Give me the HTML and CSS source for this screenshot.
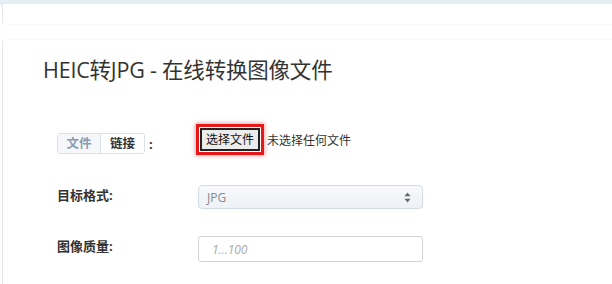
FILE: index.html
```html
<!DOCTYPE html>
<html lang="zh-CN">
<head>
<meta charset="utf-8">
<title>HEIC转JPG</title>
<link rel="stylesheet" href="styles.css">
</head>
<body>
<div class="topband"></div>
<div class="card card-top"></div>
<div class="card card-main">
  <h1 class="title">HEIC转JPG - 在线转换图像文件</h1>
  <div class="form">
    <div class="row row-file">
      <div class="label">
        <span class="tabs"><span class="tab tab-off">文件</span><span class="tab tab-on">链接</span></span><span class="colon">:</span>
      </div>
      <div class="control file-control">
        <span class="highlight"><span class="file-btn">选择文件</span></span><span class="file-none">未选择任何文件</span>
      </div>
    </div>
    <div class="row row-select">
      <div class="label label-text">目标格式:</div>
      <div class="control">
        <div class="select">
          <span class="select-value">JPG</span>
          <svg class="select-arrows" width="7" height="11" viewBox="0 0 7 11"><path d="M3.5 0.5 L6.5 4.2 H0.5 Z" fill="#666"/><path d="M3.5 10.5 L6.5 6.8 H0.5 Z" fill="#666"/></svg>
        </div>
      </div>
    </div>
    <div class="row row-input">
      <div class="label label-text">图像质量:</div>
      <div class="control">
        <div class="input"><span class="placeholder">1...100</span></div>
      </div>
    </div>
  </div>
</div>
</body>
</html>
```
FILE: styles.css
```css
html, body {
  margin: 0;
  padding: 0;
  background: #ffffff;
  overflow: hidden;
  font-family: "Open Sans", "Noto Sans CJK SC", sans-serif;
  color: #333;
}
.topband {
  height: 4px;
  background: #e6eef5;
  border-bottom: 1px solid #eef2f6;
}
.card {
  margin-left: 2px;
  margin-right: -20px;
  border: 1px solid #e4e8ec;
  border-top-color: #f8f9fa;
  border-bottom-color: #f8f9fa;
  border-radius: 4px;
  background: #fff;
}
.card-top {
  height: 20px;
  border-top: none;
  border-top-left-radius: 0;
  margin-top: -1px;
}
.card-main {
  margin-top: 14px;
  padding: 17px 0 40px 40px;
  min-height: 300px;
}
.title {
  margin: 0;
  font-size: 21.5px;
  line-height: 26px;
  font-weight: 400;
  color: #333;
  letter-spacing: -0.2px;
}
.form {
  margin-top: 40px;
  padding-left: 14px;
  display: flex;
  flex-direction: column;
}
.row {
  display: grid;
  grid-template-columns: 141px 225px;
  align-items: start;
}
.row-file { height: 62px; }
.row-select { height: 51px; }
.label { font-size: 12px; font-weight: 700; color: #333; }
.row-file .label { padding-top: 10px; display: flex; align-items: center; }
.label-text { padding-top: 1px; line-height: 19px; font-size: 13px; }
.tabs {
  display: inline-flex;
  border: 1px solid #d9e0e8;
  border-radius: 3px;
  height: 19px;
  overflow: hidden;
}
.tab {
  display: inline-flex;
  align-items: center;
  justify-content: center;
  font-size: 12.5px;
  line-height: 19px;
}
.tab-off {
  width: 42px;
  background: #f5f7fa;
  color: #8b9bb0;
  font-weight: 700;
  border-right: 1px solid #d9e0e8;
}
.tab-on {
  width: 43px;
  background: #fff;
  color: #333;
  font-weight: 700;
}
.colon { margin-left: 4px; font-weight: 700; font-size: 13px; }
.file-control {
  display: flex;
  align-items: center;
  margin-left: -2px;
  margin-top: 1px;
}
.highlight {
  display: inline-flex;
  border: 3px solid #e81818;
  box-shadow: 0 0 4px 1px rgba(200, 40, 40, 0.4);
  padding: 1px;
}
.file-btn {
  display: inline-block;
  border: 2px solid #222;
  background: #ececec;
  font-size: 12px;
  line-height: 19px;
  padding: 0 4px;
  color: #111;
  font-weight: 400;
}
.file-none {
  margin-left: 3px;
  font-size: 12px;
  color: #333;
}
.select {
  height: 24px;
  box-sizing: border-box;
  border: 1px solid #d3dbe4;
  border-radius: 4px;
  background: linear-gradient(#f7f9fb, #eef2f6);
  display: flex;
  align-items: center;
  justify-content: space-between;
  padding: 0 11px 0 8px;
}
.select-value { font-size: 12px; color: #888; }
.input {
  height: 26px;
  box-sizing: border-box;
  border: 1px solid #d0d4d8;
  border-radius: 3px;
  background: #fff;
  display: flex;
  align-items: center;
  padding-left: 13px;
}
.placeholder { font-size: 12px; font-style: italic; color: #aaa; }
```
